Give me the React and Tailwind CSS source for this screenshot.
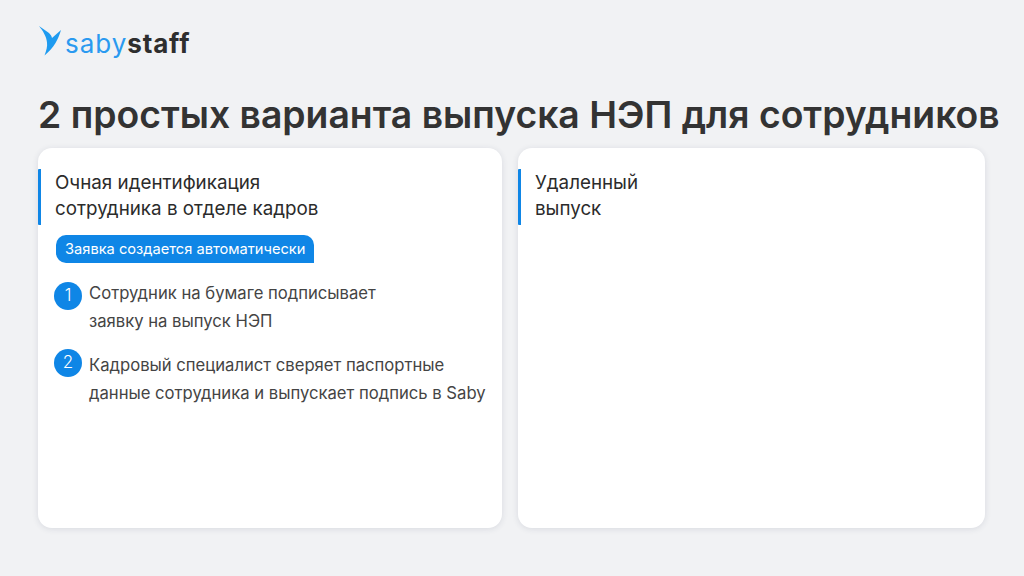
const Logo = () => (
  <div className="flex items-start h-[44px]">
    <svg width="24" height="31" viewBox="0 0 24 31" className="mt-[4px]">
      <path d="M1 0 L11 7 C12.5 8.5 13.5 10 14 12 L23 4 C21.5 9.5 19.5 13.5 17.5 17 C15 21.5 11 25.5 6.5 29.5 C8.5 24 9.5 20.5 9 16.5 C8.5 10.5 5 5 1 0 Z" fill="#1e9bf0" />
    </svg>
    <div className="ml-[3px] mt-[7px] text-[26px] leading-[30px] whitespace-nowrap">
      <span className="tracking-[1px] text-[#2a9af0] font-normal">saby</span>
      <span className="tracking-[0.8px] text-[#2e2e2e] font-bold">staff</span>
    </div>
  </div>
)

const Step = ({ num, lines, circleClass }) => (
  <div className="flex">
    <div className={`${circleClass} w-[28px] h-[28px] rounded-full bg-[#0f86e6] text-white flex items-center justify-center text-[17px] font-light shrink-0`}>
      {num}
    </div>
    <div className="ml-[7px] text-[16.65px] leading-[28px] text-[#444444]">
      {lines.map(line => <div key={line}>{line}</div>)}
    </div>
  </div>
)

const Heading = ({ lines }) => (
  <div className="border-l-[3px] border-[#0f86e6] rounded-l-[1px] pl-[14px] h-[56px] text-[18.8px] leading-[26px] text-[#2b2b2b]">
    <div className="pt-[1px]">
      {lines.map(line => <div key={line}>{line}</div>)}
    </div>
  </div>
)

export default function App() {
  return (
    <div className="w-[1024px] h-[576px] overflow-hidden bg-[#f1f2f4] font-['Inter',sans-serif] px-[38px] pt-[22px]">
      <Logo />
      <h1 className="mt-[27px] text-[37.3px] leading-[44px] font-semibold text-[#333333] whitespace-nowrap">
        2 простых варианта выпуска НЭП для сотрудников
      </h1>
      <div className="mt-[11px] flex gap-[16px]">
        <div className="w-[464px] h-[380px] bg-white rounded-[14px] shadow-[0_1px_6px_rgba(40,50,80,0.12)] pt-[21px]">
          <Heading lines={['Очная идентификация', 'сотрудника в отделе кадров']} />
          <div className="mt-[10px] ml-[18px] w-[258px] h-[28px] bg-[#0f86e6] rounded-tl-[10px] rounded-tr-[10px] rounded-bl-[10px] text-white text-[14.65px] leading-[28px] pl-[9px] whitespace-nowrap">
            Заявка создается автоматически
          </div>
          <div className="mt-[16px] ml-[16px] flex flex-col gap-[16px] whitespace-nowrap">
            <Step num="1" circleClass="mt-[3px]" lines={['Сотрудник на бумаге подписывает', 'заявку на выпуск НЭП']} />
            <Step num="2" circleClass="mt-[-2px]" lines={['Кадровый специалист сверяет паспортные', 'данные сотрудника и выпускает подпись в Saby']} />
          </div>
        </div>
        <div className="w-[467px] h-[380px] bg-white rounded-[14px] shadow-[0_1px_6px_rgba(40,50,80,0.12)] pt-[21px]">
          <Heading lines={['Удаленный', 'выпуск']} />
        </div>
      </div>
    </div>
  )
}
